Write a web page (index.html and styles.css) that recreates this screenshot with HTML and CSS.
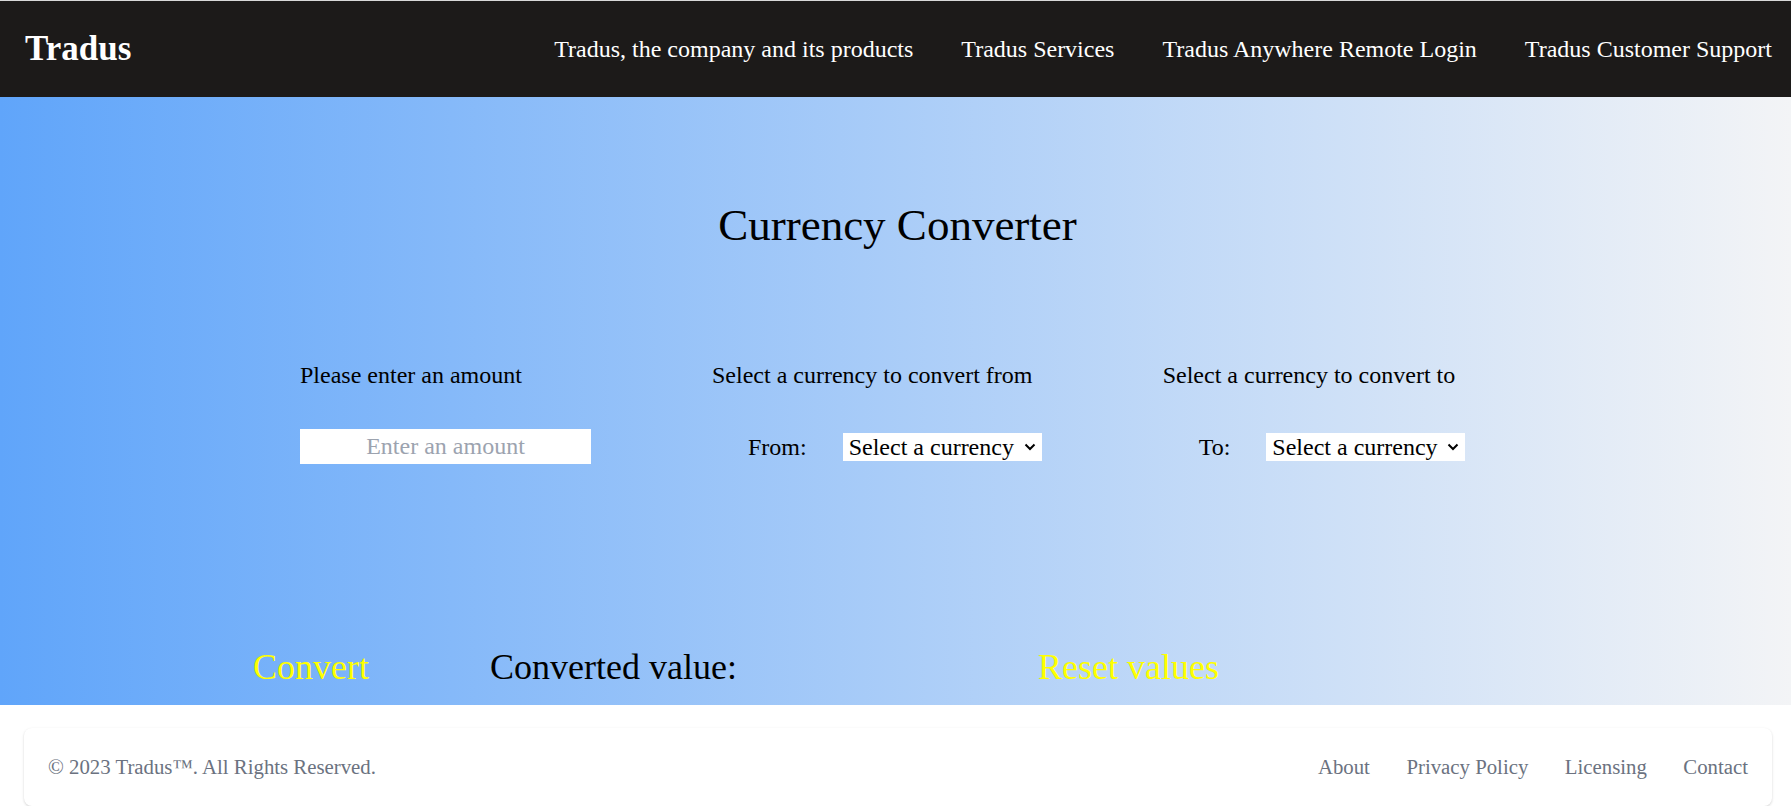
FILE: index.html
```html
<!DOCTYPE html>
<html lang="en">
<head>
<meta charset="utf-8">
<title>Tradus Currency Converter</title>
<link rel="stylesheet" href="styles.css">
</head>
<body>
<header class="topbar">
  <a class="brand" href="#">Tradus</a>
  <nav class="nav">
    <a class="nav-link" href="#">Tradus, the company and its products</a>
    <a class="nav-link" href="#">Tradus Services</a>
    <a class="nav-link" href="#">Tradus Anywhere Remote Login</a>
    <a class="nav-link" href="#">Tradus Customer Support</a>
  </nav>
</header>
<main class="hero">
  <h1 class="title">Currency Converter</h1>
  <div class="fields">
    <div class="field">
      <p class="field-label">Please enter an amount</p>
      <div class="field-row">
        <input class="amount" type="text" placeholder="Enter an amount">
      </div>
    </div>
    <div class="field">
      <p class="field-label">Select a currency to convert from</p>
      <div class="field-row">
        <label class="pick-label">From:</label>
        <select class="pick"><option>Select a currency</option></select>
      </div>
    </div>
    <div class="field">
      <p class="field-label">Select a currency to convert to</p>
      <div class="field-row">
        <label class="pick-label">To:</label>
        <select class="pick"><option>Select a currency</option></select>
      </div>
    </div>
  </div>
  <div class="actions">
    <button class="action" type="button">Convert</button>
    <p class="result">Converted value:</p>
    <button class="action" type="button">Reset values</button>
  </div>
</main>
<footer class="site-footer">
  <div class="footer-card">
    <span class="copy">© 2023 Tradus™. All Rights Reserved.</span>
    <ul class="footer-links">
      <li><a class="footer-link" href="#">About</a></li>
      <li><a class="footer-link" href="#">Privacy Policy</a></li>
      <li><a class="footer-link" href="#">Licensing</a></li>
      <li><a class="footer-link" href="#">Contact</a></li>
    </ul>
  </div>
</footer>
</body>
</html>
```
FILE: styles.css
```css
* { box-sizing: border-box; }
html, body { margin: 0; padding: 0; }
body {
  font-family: "Liberation Serif", "Times New Roman", serif;
  background: #ffffff;
  color: #000000;
}
.topbar {
  height: 97px;
  border-top: 1px solid #d8d8d8;
  background: #1c1a19;
  display: flex;
  align-items: center;
  justify-content: space-between;
  padding: 0 19px 0 25px;
}
.brand {
  color: #ffffff;
  text-decoration: none;
  font-weight: bold;
  font-size: 35px;
  line-height: 40px;
}
.nav {
  display: flex;
  gap: 48px;
}
.nav-link {
  color: #ffffff;
  text-decoration: none;
  font-size: 24px;
  line-height: 28px;
}
.hero {
  background: linear-gradient(to right, #60a5fa, #f3f4f6);
  padding: 102px 0 17px 0;
}
.title {
  margin: 0;
  text-align: center;
  font-weight: normal;
  font-size: 45px;
  line-height: 52px;
  padding-left: 4px;
}
.fields {
  display: flex;
  gap: 121px;
  padding-left: 300px;
  margin-top: 110px;
}
.field {
  display: flex;
  flex-direction: column;
  align-items: flex-start;
}
.field-label {
  margin: 0;
  font-size: 24px;
  line-height: 28px;
}
.field-row {
  margin-top: 40px;
  height: 35px;
  display: flex;
  align-items: center;
}
.amount {
  width: 291px;
  height: 35px;
  border: 0;
  padding: 0;
  outline: none;
  background: #ffffff;
  text-align: center;
  font-family: inherit;
  font-size: 24px;
  color: #000000;
}
.amount::placeholder { color: #9ca3af; }
.pick-label {
  font-size: 24px;
  line-height: 28px;
  margin: 0 36px;
}
.pick {
  -webkit-appearance: none;
  appearance: none;
  width: 199px;
  height: 28px;
  border: 0;
  border-radius: 0;
  padding: 0 0 0 6px;
  background-color: #ffffff;
  background-image: url("data:image/svg+xml;utf8,<svg xmlns='http://www.w3.org/2000/svg' width='12' height='8' viewBox='0 0 12 8'><path d='M1.5 1.5 L6 6 L10.5 1.5' fill='none' stroke='black' stroke-width='2'/></svg>");
  background-repeat: no-repeat;
  background-position: right 6px center;
  background-size: 12px 8px;
  font-family: inherit;
  font-size: 24px;
  line-height: 28px;
  color: #000000;
}
.actions {
  display: flex;
  align-items: center;
  gap: 121px;
  padding-left: 253px;
  margin-top: 182px;
}
.action {
  border: 0;
  padding: 0;
  background: transparent;
  color: #ffff00;
  font-family: inherit;
  font-size: 36px;
  line-height: 42px;
  cursor: pointer;
}
.result {
  margin: 0;
  width: 427px;
  font-size: 36px;
  line-height: 42px;
}
.site-footer {
  padding: 23px 19px 0 24px;
}
.footer-card {
  height: 78px;
  background: #ffffff;
  border-radius: 8px;
  box-shadow: 0 1px 3px rgba(0,0,0,0.12), 0 1px 2px rgba(0,0,0,0.06);
  display: flex;
  align-items: center;
  justify-content: space-between;
  padding: 0 24px;
  color: #6b7280;
  font-size: 20.8px;
}
.footer-links {
  list-style: none;
  margin: 0;
  padding: 0;
  display: flex;
  gap: 36.5px;
}
.footer-link {
  color: #6b7280;
  text-decoration: none;
}
```
